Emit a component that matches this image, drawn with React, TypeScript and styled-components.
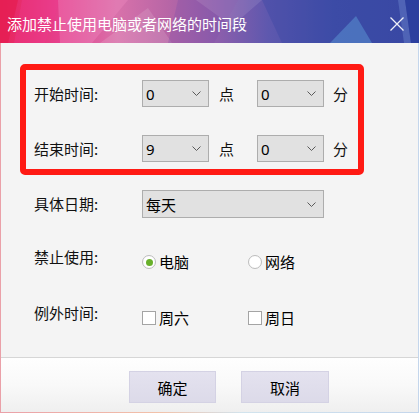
import React from 'react';
import styled, { createGlobalStyle } from 'styled-components';

const GlobalStyle = createGlobalStyle`
  html, body {
    margin: 0;
    padding: 0;
    background: #ffffff;
  }
  body {
    font-family: "Noto Sans CJK SC", "Noto Sans", sans-serif;
  }
`;

const Window = styled.div`
  width: 419px;
  height: 413px;
  display: flex;
  flex-direction: column;
  overflow: hidden;
`;

const TitleBar = styled.div`
  position: relative;
  height: 43px;
  flex: none;
  display: flex;
  align-items: center;
  justify-content: space-between;
  padding: 4px 15px 0 7px;
  box-sizing: border-box;
  background: linear-gradient(
    90deg,
    #e8245c 0%,
    #e6408c 14%,
    #d871aa 28%,
    #b866a6 40%,
    #8c5eac 52%,
    #5e58ae 64%,
    #3f4fa8 80%,
    #3a4aa4 100%
  );
`;

const Facets = styled.svg`
  position: absolute;
  inset: 0;
  width: 100%;
  height: 100%;
`;

const Title = styled.span`
  position: relative;
  color: #ffffff;
  font-size: 15px;
`;

const CloseButton = styled.svg`
  position: relative;
  width: 14px;
  height: 14px;
`;

const Frame = styled.div`
  flex: 1;
  display: flex;
  flex-direction: column;
  padding: 0 1px 1px;
  background: linear-gradient(90deg, #eaa0a8 0%, #f2c2aa 38%, #d2e4ee 58%, #c4d6ec 100%);
`;

const Body = styled.div`
  flex: 1;
  background: #f4f4f4;
  padding: 21px 0 0 19px;
  border-bottom: 1px solid #d6d6d6;
`;

const Highlight = styled.div`
  width: 344px;
  height: 111px;
  box-sizing: border-box;
  border: 6px solid #ff1a14;
  border-radius: 5px;
  padding: 10px 0 0 8px;
  display: flex;
  flex-direction: column;
  gap: 28px;
`;

const Row = styled.div<{ $top?: number; $indent?: number }>`
  display: flex;
  align-items: center;
  margin-top: ${p => p.$top ?? 0}px;
  padding-left: ${p => p.$indent ?? 0}px;
`;

const OptionRow = styled.div<{ $top: number }>`
  display: flex;
  align-items: flex-start;
  margin-top: ${p => p.$top}px;
  padding-left: 14px;
`;

const Label = styled.span`
  width: 108px;
  flex: none;
  font-size: 15px;
  line-height: 20px;
  color: #111;
`;

const Select = styled.div<{ $w: number; $h?: number }>`
  width: ${p => p.$w}px;
  height: ${p => p.$h ?? 27}px;
  box-sizing: border-box;
  background: #e1e1e1;
  border: 1px solid #adadad;
  display: flex;
  align-items: center;
  justify-content: space-between;
  padding: 0 7px 0 3px;
  font-size: 15px;
  color: #000;
`;

const Value = styled.span<{ $cjk?: boolean }>`
  font-family: ${p => (p.$cjk ? '"Noto Sans CJK SC", sans-serif' : '"Noto Sans", sans-serif')};
  font-size: 15px;
  line-height: 1;
  padding-top: ${p => (p.$cjk ? 1 : 2)}px;
`;

const Unit = styled.span<{ $right?: number }>`
  font-size: 15px;
  margin: 0 ${p => p.$right ?? 0}px 0 ${p => (p.$right ? 10 : 9)}px;
  color: #111;
`;

const Options = styled.div`
  display: flex;
  margin-top: 5px;
`;

const Option = styled.label`
  width: 106px;
  display: flex;
  align-items: center;
  font-size: 15px;
  line-height: 20px;
  color: #000;
  gap: 3px;
`;

const Radio = styled.span<{ $on?: boolean }>`
  width: 14px;
  height: 14px;
  box-sizing: border-box;
  border-radius: 50%;
  border: 1px solid #bdbdbd;
  background: radial-gradient(circle, #ffffff 60%, #eeeeee 100%);
  display: flex;
  align-items: center;
  justify-content: center;

  &::after {
    content: "";
    width: 7px;
    height: 7px;
    border-radius: 50%;
    background: ${p => (p.$on ? '#68b02a' : 'transparent')};
  }
`;

const Check = styled.span`
  width: 14px;
  height: 14px;
  box-sizing: border-box;
  border: 1px solid #a4a4a4;
  background: #ffffff;
`;

const Footer = styled.div`
  height: 54px;
  flex: none;
  display: flex;
  align-items: flex-start;
  gap: 25px;
  padding: 13px 0 0 128px;
  box-sizing: border-box;
  background: linear-gradient(180deg, #fefefe 0%, #f9f9f9 50%, #efefef 100%);
`;

const Button = styled.button<{ $w: number }>`
  width: ${p => p.$w}px;
  height: 32px;
  border: 1px solid #d4d2e4;
  background: linear-gradient(180deg, #e4e2ef 0%, #dcdae9 100%);
  font-family: "Noto Sans CJK SC", sans-serif;
  font-size: 15px;
  color: #000;
  padding: 0;
`;

const Chevron = () => (
  <svg width="9" height="5" viewBox="0 0 9 5">
    <path d="M0.5 0.5 L4.5 4.5 L8.5 0.5" fill="none" stroke="#5a5a5a" strokeWidth="1" />
  </svg>
);

export default function App() {
  return (
    <Window>
      <GlobalStyle />
      <TitleBar>
        <Facets viewBox="0 0 419 43" preserveAspectRatio="none">
          <polygon points="0,0 18,0 8,43 0,43" fill="#e61e52" opacity="0.75" />
          <polygon points="22,0 60,0 45,43 14,43" fill="#ee3a8e" opacity="0.35" />
          <polygon points="58,0 128,0 92,43 60,43" fill="#f28cc4" opacity="0.35" />
          <polygon points="100,43 148,8 172,43" fill="#ffffff" opacity="0.12" />
          <polygon points="178,0 238,0 214,43 168,43" fill="#7e4ea8" opacity="0.3" />
          <polygon points="196,0 262,0 232,26" fill="#ffffff" opacity="0.1" />
          <polygon points="262,0 419,0 419,43 282,43" fill="#3646a4" opacity="0.35" />
          <polygon points="330,43 356,16 372,43" fill="#5a92d2" opacity="0.55" />
          <polygon points="398,0 405,0 411,43 404,43" fill="#6a86cc" opacity="0.45" />
          <polygon points="405,0 419,0 419,43 411,43" fill="#22389a" opacity="0.55" />
        </Facets>
        <Title>添加禁止使用电脑或者网络的时间段</Title>
        <CloseButton viewBox="0 0 14 14">
          <path d="M0.5 0.5 L13.5 13.5 M13.5 0.5 L0.5 13.5" stroke="#ffffff" strokeWidth="1.3" opacity="0.92" />
        </CloseButton>
      </TitleBar>
      <Frame>
        <Body>
          <Highlight>
            <Row>
              <Label>开始时间:</Label>
              <Select $w={67}>
                <Value>0</Value>
                <Chevron />
              </Select>
              <Unit $right={23}>点</Unit>
              <Select $w={67}>
                <Value>0</Value>
                <Chevron />
              </Select>
              <Unit>分</Unit>
            </Row>
            <Row>
              <Label>结束时间:</Label>
              <Select $w={67}>
                <Value>9</Value>
                <Chevron />
              </Select>
              <Unit $right={23}>点</Unit>
              <Select $w={67}>
                <Value>0</Value>
                <Chevron />
              </Select>
              <Unit>分</Unit>
            </Row>
          </Highlight>
          <Row $top={15} $indent={14}>
            <Label>具体日期:</Label>
            <Select $w={182} $h={28}>
              <Value $cjk>每天</Value>
              <Chevron />
            </Select>
          </Row>
          <OptionRow $top={29}>
            <Label>禁止使用:</Label>
            <Options>
              <Option>
                <Radio $on />
                电脑
              </Option>
              <Option>
                <Radio />
                网络
              </Option>
            </Options>
          </OptionRow>
          <OptionRow $top={31}>
            <Label>例外时间:</Label>
            <Options>
              <Option>
                <Check />
                周六
              </Option>
              <Option>
                <Check />
                周日
              </Option>
            </Options>
          </OptionRow>
        </Body>
        <Footer>
          <Button $w={87}>确定</Button>
          <Button $w={88}>取消</Button>
        </Footer>
      </Frame>
    </Window>
  );
}
